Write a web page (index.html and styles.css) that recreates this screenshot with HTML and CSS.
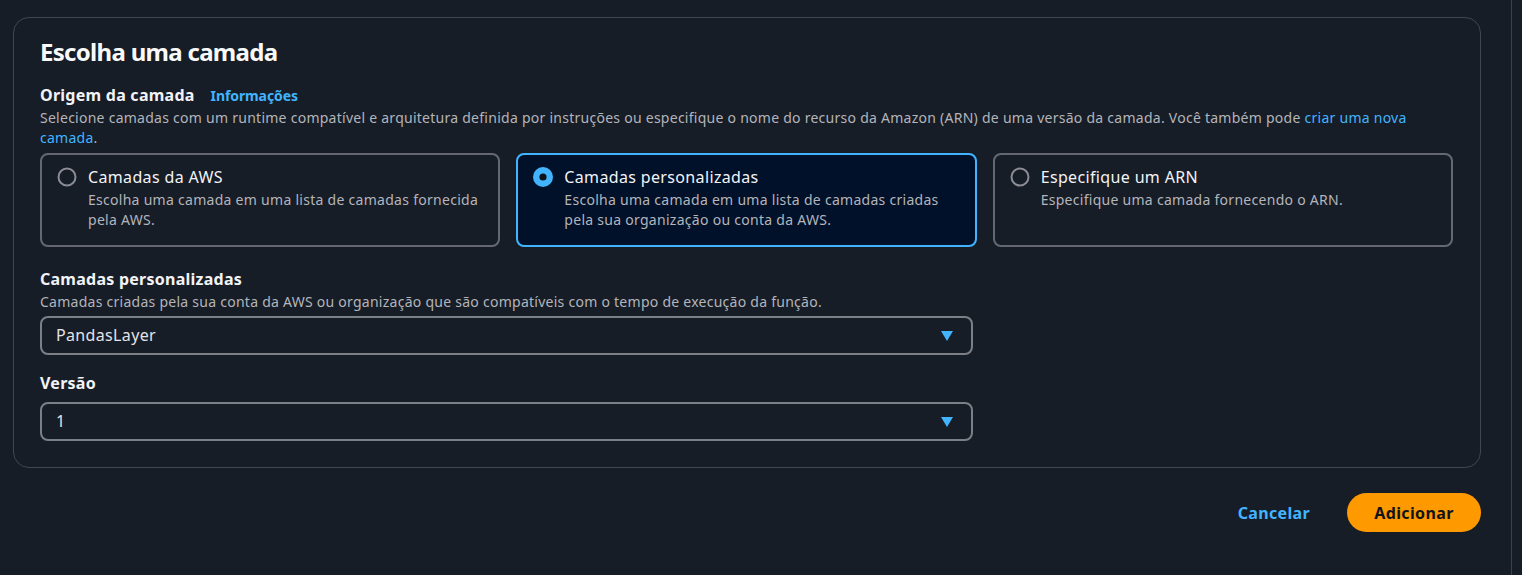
FILE: index.html
```html
<!DOCTYPE html>
<html lang="pt-BR">
<head>
<meta charset="utf-8">
<title>Escolha uma camada</title>
<link rel="stylesheet" href="styles.css">
</head>
<body>
<div class="page">
  <main class="main">
    <section class="panel">
      <h2 class="title">Escolha uma camada</h2>

      <div class="label-row">
        <span class="label">Origem da camada</span>
        <a class="info">Informações</a>
      </div>
      <p class="desc">Selecione camadas com um runtime compatível e arquitetura definida por instruções ou especifique o nome do recurso da Amazon (ARN) de uma versão da camada. Você também pode <a class="link">criar uma nova camada</a>.</p>

      <div class="tiles">
        <div class="tile">
          <svg class="radio" width="20" height="20" viewBox="0 0 20 20"><circle cx="10" cy="10" r="8.5" fill="none" stroke="#8c8c94" stroke-width="2"/></svg>
          <div class="tile-text">
            <div class="tile-title">Camadas da AWS</div>
            <div class="tile-desc">Escolha uma camada em uma lista de camadas fornecida pela AWS.</div>
          </div>
        </div>
        <div class="tile selected">
          <svg class="radio" width="20" height="20" viewBox="0 0 20 20"><circle cx="10" cy="10" r="10" fill="#42b4ff"/><circle cx="10" cy="10" r="3.6" fill="#0f141a"/></svg>
          <div class="tile-text">
            <div class="tile-title">Camadas personalizadas</div>
            <div class="tile-desc">Escolha uma camada em uma lista de camadas criadas pela sua organização ou conta da AWS.</div>
          </div>
        </div>
        <div class="tile">
          <svg class="radio" width="20" height="20" viewBox="0 0 20 20"><circle cx="10" cy="10" r="8.5" fill="none" stroke="#8c8c94" stroke-width="2"/></svg>
          <div class="tile-text">
            <div class="tile-title">Especifique um ARN</div>
            <div class="tile-desc">Especifique uma camada fornecendo o ARN.</div>
          </div>
        </div>
      </div>

      <div class="field field-layers">
        <div class="label">Camadas personalizadas</div>
        <p class="desc">Camadas criadas pela sua conta da AWS ou organização que são compatíveis com o tempo de execução da função.</p>
        <div class="select select-after-desc">
          <span class="select-value">PandasLayer</span>
          <svg class="caret" width="12" height="10" viewBox="0 0 12 10"><path d="M0 0 H12 L6 10 Z" fill="#42b4ff"/></svg>
        </div>
      </div>

      <div class="field field-version">
        <div class="label">Versão</div>
        <div class="select select-after-label">
          <span class="select-value">1</span>
          <svg class="caret" width="12" height="10" viewBox="0 0 12 10"><path d="M0 0 H12 L6 10 Z" fill="#42b4ff"/></svg>
        </div>
      </div>
    </section>

    <div class="actions">
      <a class="cancel">Cancelar</a>
      <button class="primary">Adicionar</button>
    </div>
  </main>
  <div class="rail"></div>
</div>
</body>
</html>
```

FILE: styles.css
```css
* { box-sizing: border-box; }

html, body {
  margin: 0;
  padding: 0;
  background: #161d26;
  font-family: "Noto Sans", "Open Sans", Arial, sans-serif;
  color: #dedee3;
  height: 100%;
}

.page {
  display: flex;
  min-height: 575px;
}

.main {
  width: 1511px;
  padding: 17px 30px 0 13px;
}

.rail {
  width: 1px;
  background: #3a414b;
  flex: 0 0 1px;
}

.panel {
  border: 1px solid #414750;
  border-radius: 16px;
  padding: 19px 27px 26px 26px;
}

.title {
  margin: 0;
  font-size: 24px;
  line-height: 30px;
  font-weight: 700;
  letter-spacing: -0.7px;
  color: #f9f9fa;
}

.label-row {
  display: flex;
  align-items: baseline;
  gap: 16px;
  margin-top: 17px;
}

.label {
  font-size: 16px;
  line-height: 22px;
  font-weight: 700;
  letter-spacing: 0.25px;
  color: #f3f3f7;
}

.info {
  font-size: 14px;
  line-height: 20px;
  font-weight: 700;
  letter-spacing: -0.1px;
  color: #42b4ff;
}

.desc {
  margin: 2px 0 0;
  font-size: 14px;
  line-height: 20px;
  letter-spacing: 0.26px;
  color: #b4b4bb;
}

.link {
  color: #42b4ff;
}

.tiles {
  display: grid;
  grid-template-columns: repeat(3, 1fr);
  gap: 16px;
  margin-top: 5px;
}

.tile {
  display: flex;
  align-items: flex-start;
  gap: 11px;
  border: 2px solid #656871;
  border-radius: 8px;
  padding: 11px 16px 15px 15px;
}

.tile.selected {
  border-color: #42b4ff;
  background: #001129;
}

.radio {
  flex: 0 0 20px;
  margin-top: 1px;
}

.tile-title {
  font-size: 16px;
  line-height: 22px;
  letter-spacing: 0.35px;
  color: #f3f3f7;
}

.tile-desc {
  margin-top: 2px;
  font-size: 14px;
  line-height: 20px;
  letter-spacing: 0.28px;
  color: #b4b4bb;
}

.field-layers {
  margin-top: 21px;
}

.field-version {
  margin-top: 17px;
}

.select {
  width: 66%;
  display: flex;
  align-items: center;
  justify-content: space-between;
  border: 2px solid #7d7f87;
  border-radius: 8px;
  padding: 6px 18px 7px 14px;
}

.select-after-desc { margin-top: 4px; }
.select-after-label { margin-top: 8px; }

.select-value {
  font-size: 16px;
  line-height: 22px;
  letter-spacing: 0.35px;
  color: #e3e3e8;
}

.caret {
  margin-top: 1px;
}

.actions {
  display: flex;
  justify-content: flex-end;
  align-items: center;
  gap: 37px;
  margin-top: 25px;
}

.cancel {
  font-size: 16px;
  line-height: 22px;
  font-weight: 700;
  letter-spacing: 0.35px;
  color: #42b4ff;
}

.primary {
  font-family: inherit;
  font-size: 16px;
  line-height: 22px;
  font-weight: 700;
  letter-spacing: 0.35px;
  color: #0f141a;
  background: #ff9900;
  border: none;
  border-radius: 20px;
  height: 39px;
  width: 134px;
  padding: 0;
}
```
